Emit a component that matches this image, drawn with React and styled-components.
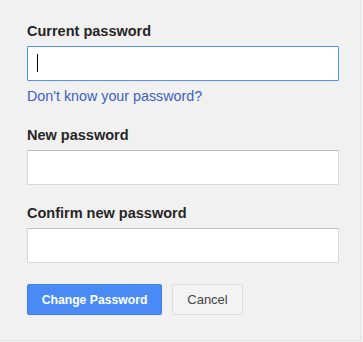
import React from 'react'
import styled, { createGlobalStyle } from 'styled-components'

const GlobalStyle = createGlobalStyle`
  html, body {
    margin: 0;
    padding: 0;
    background: #f1f1f1;
  }
  body {
    font-family: "Liberation Sans", Arial, sans-serif;
  }
`

const Panel = styled.div`
  box-sizing: border-box;
  width: 361px;
  height: 341px;
  padding: 23px 0 0 27px;
  background: #f1f1f1;
  border-right: 1px solid #e4e4e4;
  border-bottom: 1px solid #e4e4e4;
`

const Field = styled.div`
  display: flex;
  flex-direction: column;
  margin-top: ${(p) => p.$gap || 0}px;
`

const Label = styled.label`
  font-size: 14.5px;
  font-weight: bold;
  line-height: 17px;
  color: #262626;
  margin-bottom: 6px;
`

const Input = styled.input`
  box-sizing: border-box;
  width: 312px;
  height: 35px;
  margin: 0;
  padding: 0 9px;
  background: #fff;
  border: 1px solid ${(p) => (p.$focused ? '#4d90fe' : '#d9d9d9')};
  border-top-color: ${(p) => (p.$focused ? '#4d90fe' : '#c0c0c0')};
  border-radius: 1px;
  font-family: inherit;
  font-size: 15px;
  outline: none;
`

const Caret = styled.span`
  position: absolute;
  left: 10px;
  top: 8px;
  width: 1px;
  height: 18px;
  background: #000;
`

const InputWrap = styled.div`
  position: relative;
  width: 312px;
`

const HelpLink = styled.a`
  display: block;
  margin-top: 7px;
  font-size: 14.3px;
  line-height: 17px;
  color: #3d5fc4;
  text-decoration: none;
`

const Actions = styled.div`
  display: flex;
  gap: 10px;
  margin-top: 21px;
`

const Button = styled.button`
  box-sizing: border-box;
  height: 31px;
  padding: 0;
  width: ${(p) => p.$width}px;
  border-radius: 2px;
  font-family: inherit;
  font-size: ${(p) => (p.$primary ? '12.2px' : '13px')};
  font-weight: ${(p) => (p.$primary ? 'bold' : 'normal')};
  color: ${(p) => (p.$primary ? '#fff' : '#444')};
  background: ${(p) => (p.$primary ? '#4a8af4' : '#f3f3f3')};
  border: 1px solid ${(p) => (p.$primary ? '#3f7fe8' : '#dcdcdc')};
  cursor: pointer;
`

const App = () => {
  return (
    <>
      <GlobalStyle />
      <Panel>
        <Field>
          <Label>Current password</Label>
          <InputWrap>
            <Input type='password' $focused />
            <Caret />
          </InputWrap>
        </Field>
        <HelpLink href='#'>Don't know your password?</HelpLink>
        <Field $gap={22}>
          <Label>New password</Label>
          <Input type='password' />
        </Field>
        <Field $gap={20}>
          <Label>Confirm new password</Label>
          <Input type='password' />
        </Field>
        <Actions>
          <Button $primary $width={135}>Change Password</Button>
          <Button $width={71}>Cancel</Button>
        </Actions>
      </Panel>
    </>
  )
}

export default App
